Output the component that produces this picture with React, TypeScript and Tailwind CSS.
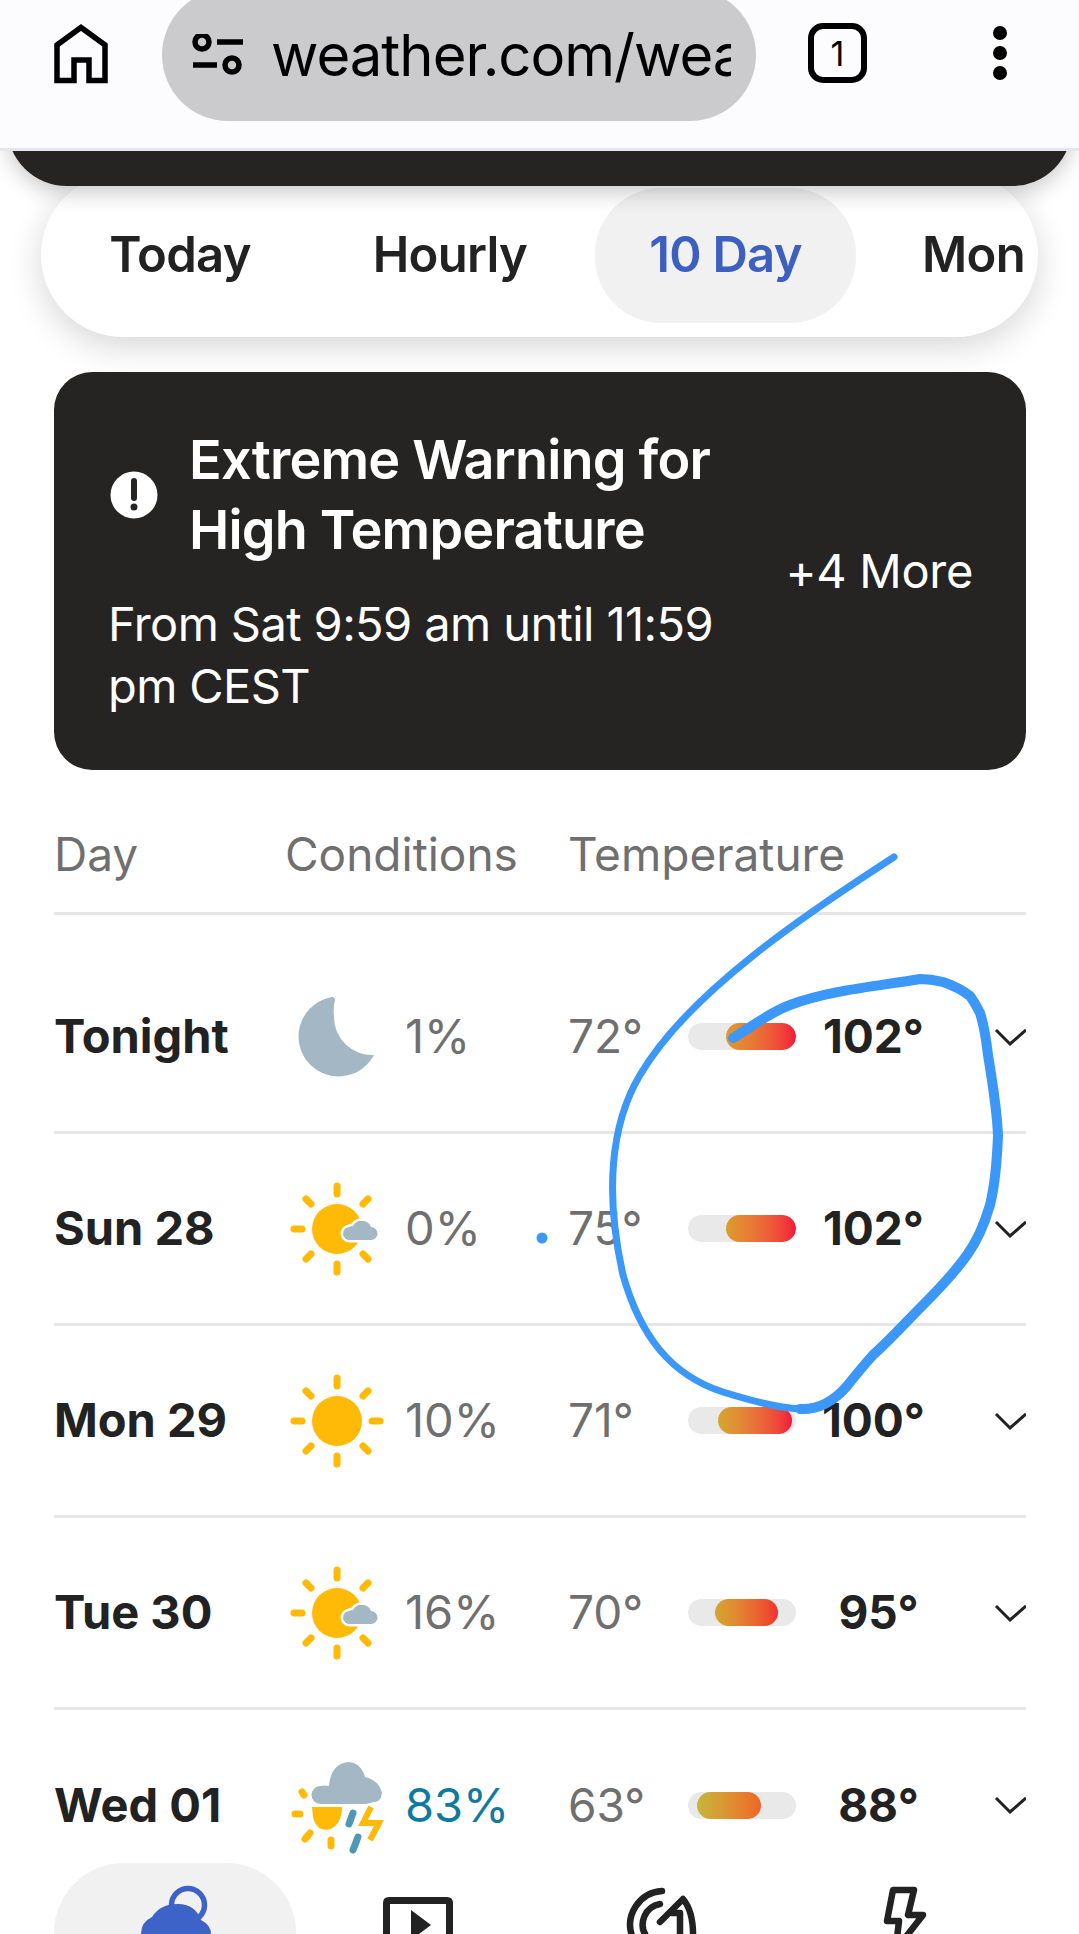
import React from 'react';

const rows = [
  { day: 'Tonight', icon: 'moon', pop: '1%', low: '72°', high: '102°', fill: 'ml-[38px] w-[70px] bg-gradient-to-r from-[#dc9c2e] to-[#f2103a]', pt: 'h-[219px] pt-[27px]' },
  { day: 'Sun 28', icon: 'partly', pop: '0%', low: '75°', high: '102°', fill: 'ml-[38px] w-[70px] bg-gradient-to-r from-[#dc9c2e] to-[#f2103a]', pt: 'h-[192px]' },
  { day: 'Mon 29', icon: 'sun', pop: '10%', low: '71°', high: '100°', fill: 'ml-[30px] w-[74px] bg-gradient-to-r from-[#d4a730] to-[#f2103a]', pt: 'h-[192px]' },
  { day: 'Tue 30', icon: 'partly', pop: '16%', low: '70°', high: '95°', fill: 'ml-[27px] w-[63px] bg-gradient-to-r from-[#d4a730] to-[#f0302e]', pt: 'h-[192px]' },
  { day: 'Wed 01', icon: 'storm', pop: '83%', low: '63°', high: '88°', fill: 'ml-[9px] w-[64px] bg-gradient-to-r from-[#c4b63c] to-[#ee6428]', pt: 'h-[190px]' },
];

const Rays = ({ all }: { all: boolean }) => (
  <g stroke="#ffb907" strokeWidth="7" strokeLinecap="round">
    <path d="M50 7V15M50 85V93M7 50H15M19 20L24 25M81 20L76 25M19 80L24 75M81 80L76 75" />
    {all && <path d="M85 50H93" />}
  </g>
);

const WeatherIcon = ({ name }: { name: string }) => {
  if (name === 'moon') {
    return (
      <svg width="100" height="100" viewBox="0 0 100 100">
        <path d="M45 10A40 40 0 1 0 87 68A38 38 0 0 1 47 30Q46 20 48 13Q48 10 45 10Z" fill="#a3b8c4" />
      </svg>
    );
  }
  if (name === 'sun') {
    return (
      <svg width="100" height="100" viewBox="0 0 100 100">
        <Rays all />
        <circle cx="50" cy="50" r="25" fill="#ffb907" />
      </svg>
    );
  }
  if (name === 'partly') {
    return (
      <svg width="100" height="100" viewBox="0 0 100 100">
        <Rays all={false} />
        <circle cx="50" cy="50" r="25" fill="#ffb907" />
        <path
          d="M63 61A6.5 6.5 0 0 1 62 48Q64 47 66 47A10 10 0 0 1 84 48A6.5 6.5 0 0 1 84 61Z"
          fill="#a3b8c4"
          stroke="#fff"
          strokeWidth="5"
          paintOrder="stroke"
        />
      </svg>
    );
  }
  return (
    <svg width="100" height="100" viewBox="0 0 100 100">
      <g stroke="#ffb907" strokeWidth="7" strokeLinecap="round">
        <path d="M15 37L17 40M8 59H13M18 84L23 78M44 85V91" />
      </g>
      <path d="M25 52H55Q55 68 44 74Q30 78 26 62Z" fill="#ffb907" />
      <path
        d="M33 49A9 9 0 0 1 34 31Q38 30 42 31Q44 8 62 7Q74 8 78 22Q92 25 95 38Q94 47 87 47L79 49Z"
        fill="#a3b8c4"
      />
      <path d="M66 58L62 69M71 82L66 95" stroke="#4f97b5" strokeWidth="7" strokeLinecap="round" />
      <path d="M84 52L76 68H92L83 85" fill="none" stroke="#ffb907" strokeWidth="6" />
    </svg>
  );
};

const Row = ({ row }: { row: (typeof rows)[number] }) => (
  <div className={`flex items-center border-b-[3px] border-[#e6e6e6] last:border-b-0 ${row.pt}`}>
    <div className="w-[233px] text-[47px] font-bold text-[#222222]">{row.day}</div>
    <div className="w-[100px]">
      <WeatherIcon name={row.icon} />
    </div>
    <div className={`w-[181px] pl-[18px] text-[47px] ${row.icon === 'storm' ? 'text-[#0f7a9e]' : 'text-[#6f6f6f]'}`}>
      {row.pop}
    </div>
    <div className="w-[120px] text-[46px] text-[#6f6f6f]">{row.low}</div>
    {/* temperature range bar */}
    <div className="h-[27px] w-[108px] overflow-hidden rounded-full bg-[#e9e9e9]">
      <div className={`h-full rounded-full ${row.fill}`}></div>
    </div>
    <div className={`w-[155px] text-center text-[46px] font-bold text-[#222222] ${row.high.length === 3 ? 'pl-[10px]' : ''}`}>
      {row.high}
    </div>
    <div className="flex flex-1 justify-end overflow-hidden">
      <svg width="32" height="20" viewBox="0 0 32 20" className="shrink-0">
        <path d="M2 3L16 17L32 3" fill="none" stroke="#222222" strokeWidth="3" />
      </svg>
    </div>
  </div>
);

const App = () => {
  return (
    <div className="relative flex h-[1934px] w-[1079px] flex-col overflow-hidden bg-white font-[Inter,sans-serif]">
      {/* Browser toolbar */}
      <div className="relative z-20 flex h-[151px] shrink-0 items-start border-b-[3px] border-[#e6e6f0] bg-[#fcfcff]">
        <svg width="62" height="68" viewBox="50 20 62 68" className="ml-[50px] mt-[20px] shrink-0">
          <path d="M57 80.5V45L81 27.5L105 45V80.5H89V60H74V80.5Z" fill="none" stroke="#000" strokeWidth="5.5" />
        </svg>
        <div className="ml-[50px] -mt-[11px] flex h-[132px] w-[594px] shrink-0 items-center rounded-[66px] bg-[#cbcbcd] pl-[29px]">
          <svg width="52" height="42" viewBox="0 0 52 42" className="shrink-0">
            <g fill="none" stroke="#000" strokeWidth="5.5">
              <circle cx="11" cy="8" r="7" />
              <circle cx="41" cy="31" r="7" />
              <path d="M26 8H52M2 31H26" />
            </g>
          </svg>
          <div className="ml-[28px] w-[460px] overflow-hidden whitespace-nowrap text-[58px] leading-none tracking-[-1px] text-black">
            weather.com/weather
          </div>
        </div>
        <div className="ml-[52px] mt-[23px] flex h-[60px] w-[59px] shrink-0 items-center justify-center rounded-[15px] border-[6px] border-black text-[34px] text-black">
          1
        </div>
        <div className="ml-[126px] mt-[26px] flex shrink-0 flex-col gap-[6px]">
          <div className="h-[14px] w-[14px] rounded-full bg-black"></div>
          <div className="h-[14px] w-[14px] rounded-full bg-black"></div>
          <div className="h-[14px] w-[14px] rounded-full bg-black"></div>
        </div>
      </div>

      {/* Dark header peeking under the toolbar */}
      <div className="relative z-10 mx-[7px] -mt-[85px] h-[120px] shrink-0 rounded-[60px] bg-[#252423] shadow-[0_6px_22px_rgba(0,0,0,0.22)]"></div>

      {/* Tabs */}
      <div className="mx-[41px] -mt-[13px] flex h-[164px] shrink-0 items-center rounded-[82px] bg-white pl-[14px] pr-[14px] shadow-[0_10px_34px_rgba(0,0,0,0.16)]">
        <div className="flex flex-1 items-center gap-[13px] overflow-hidden whitespace-nowrap text-[49px] font-semibold tracking-[-0.7px] text-[#222222]">
          <div className="flex h-[135px] w-[250px] shrink-0 items-center justify-center">Today</div>
          <div className="flex h-[135px] w-[264px] shrink-0 items-center justify-center">Hourly</div>
          <div className="flex h-[135px] w-[261px] shrink-0 items-center justify-center rounded-[66px] bg-[#f1f1f1] text-[#3d5fc0]">
            10 Day
          </div>
          <div className="flex h-[135px] shrink-0 items-center pl-[53px]">Monthly</div>
        </div>
      </div>

      {/* Alert card */}
      <div className="ml-[54px] mr-[53px] mt-[35px] flex h-[398px] shrink-0 items-center justify-between rounded-[38px] bg-[#252423] pl-[54px] pr-[53px] text-white">
        <div className="w-[625px]">
          <div className="flex items-center">
            <svg width="48" height="48" viewBox="0 0 48 48" className="ml-[2px] shrink-0">
              <circle cx="24" cy="24" r="23.5" fill="#fff" />
              <path d="M24 10V27" stroke="#252423" strokeWidth="6" strokeLinecap="round" />
              <circle cx="24" cy="36" r="3.5" fill="#252423" />
            </svg>
            <div className="ml-[31px] w-[544px] text-[54px] font-semibold leading-[70px] tracking-[-0.8px]">
              Extreme Warning for High Temperature
            </div>
          </div>
          <div className="mt-[28px] text-[47px] leading-[62px] tracking-[-0.6px]">From Sat 9:59 am until 11:59 pm CEST</div>
        </div>
        <div className="whitespace-nowrap text-[47px] tracking-[-0.3px]">+4 More</div>
      </div>

      {/* Daily table */}
      <div className="ml-[54px] mr-[53px] mt-[26px] flex h-[119px] shrink-0 items-center border-b-[3px] border-[#e6e6e6] text-[46px] text-[#6f6f6f]">
        <div className="w-[231px]">Day</div>
        <div className="w-[283px]">Conditions</div>
        <div>Temperature</div>
      </div>
      <div className="ml-[54px] mr-[53px] shrink-0">
        {rows.map((row) => (
          <Row key={row.day} row={row} />
        ))}
      </div>

      {/* Bottom navigation, sits over the list */}
      <div className="absolute bottom-0 left-0 right-0 z-10 flex h-[71px] overflow-hidden bg-white pl-[54px]">
        <div className="h-[140px] w-[242px] shrink-0 rounded-[100px] bg-[#f1f1f1] pl-[76px] pt-[17px]">
          <svg width="90" height="54" viewBox="130 1880 90 54">
            <circle cx="188" cy="1905" r="16.5" fill="none" stroke="#3d62c8" strokeWidth="5.5" />
            <path d="M141 1934Q141 1922 152 1917Q160 1904 178 1904Q195 1904 201 1920Q211 1925 211 1934Z" fill="#3d62c8" />
          </svg>
        </div>
        <svg width="70" height="37" viewBox="383 1897 70 37" className="ml-[87px] mt-[34px] shrink-0">
          <path d="M386.5 1934V1903Q386.5 1900.5 389 1900.5H447Q449.5 1900.5 449.5 1903V1934" fill="none" stroke="#222222" strokeWidth="7" />
          <path d="M411 1910L431 1925L411 1940Z" fill="#222222" />
        </svg>
        <svg width="80" height="54" viewBox="620 1880 80 54" className="ml-[167px] mt-[17px] shrink-0">
          <g fill="none" stroke="#222222" strokeWidth="6.5" strokeLinecap="round" strokeLinejoin="round">
            <path d="M662 1891A34 34 0 0 0 632 1936" />
            <path d="M660 1904A21 21 0 0 0 646 1936" />
            <path d="M660 1922L683 1899Q694 1912 693 1940" />
            <path d="M672 1913H680V1940" />
          </g>
        </svg>
        <svg width="50" height="54" viewBox="880 1880 50 54" className="ml-[180px] mt-[17px] shrink-0">
          <path d="M897 1938L899 1921H887L893 1890H914L908 1915H923L905 1938" fill="none" stroke="#222222" strokeWidth="6.5" strokeLinejoin="round" />
        </svg>
      </div>

      {/* Hand-drawn annotation on top of the screenshot */}
      <svg width="1079" height="1934" viewBox="0 0 1079 1934" className="pointer-events-none absolute left-0 top-0 z-30">
        <circle cx="542" cy="1238" r="5.5" fill="#3b97f8" />
        <path
          d="M894 857C810 912 690 990 640 1075C610 1125 605 1195 623 1275C640 1335 670 1375 723 1392C755 1402 780 1408 800 1409"
          fill="none"
          stroke="#3b97f8"
          strokeWidth="7"
          strokeLinecap="round"
        />
        <path
          d="M800 1409C820 1410 835 1400 847 1386C855 1376 864 1365 873 1355C890 1340 906 1322 923 1305C940 1288 955 1272 967 1255C978 1240 985 1222 990 1205C995 1185 997 1160 998 1136C997 1108 992 1080 988 1055C986 1038 984 1025 980 1013C976 1005 973 1000 970 996C961 989 952 985 943 982C935 980 928 979 920 979C880 986 830 990 790 1005C770 1012 750 1028 733 1038"
          fill="none"
          stroke="#3b97f8"
          strokeWidth="10"
          strokeLinecap="round"
        />
      </svg>
    </div>
  );
};

export default App;
